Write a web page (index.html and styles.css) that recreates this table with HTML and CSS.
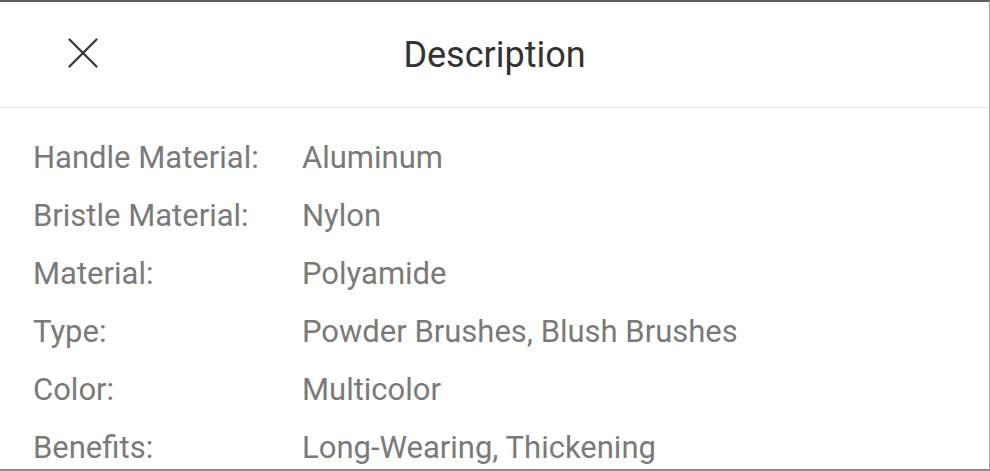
FILE: index.html
```html
<!DOCTYPE html>
<html>
<head>
<meta charset="utf-8">
<link rel="stylesheet" href="styles.css">
</head>
<body>
<div class="sheet">
  <header class="head">
    <button class="close" aria-label="Close">
      <svg width="30" height="30" viewBox="0 0 30 30"><path d="M1.5 1.5 L28.5 28.5 M28.5 1.5 L1.5 28.5" stroke="#333" stroke-width="2.2" stroke-linecap="round" fill="none"/></svg>
    </button>
    <h1 class="title">Description</h1>
    <span></span>
  </header>
  <div class="rows">
    <div class="row"><span class="label">Handle Material:</span><span class="value">Aluminum</span></div>
    <div class="row"><span class="label">Bristle Material:</span><span class="value">Nylon</span></div>
    <div class="row"><span class="label">Material:</span><span class="value">Polyamide</span></div>
    <div class="row"><span class="label">Type:</span><span class="value">Powder Brushes, Blush Brushes</span></div>
    <div class="row"><span class="label">Color:</span><span class="value">Multicolor</span></div>
    <div class="row"><span class="label">Benefits:</span><span class="value">Long-Wearing, Thickening</span></div>
  </div>
</div>
</body>
</html>
```
FILE: styles.css
```css
html, body { margin: 0; padding: 0; background: #fff; }
body { font-family: Roboto, "Noto Sans", Arial, sans-serif; }
.sheet {
  box-sizing: border-box;
  width: 990px;
  height: 471px;
  border-top: 2px solid #5f5f5f;
  border-right: 1px solid #a9a9a9;
  border-bottom: 2px solid #8c8c8c;
  overflow: hidden;
  background: #fff;
}
.head {
  height: 105px;
  border-bottom: 1px solid #e6e6e6;
  display: grid;
  grid-template-columns: 1fr auto 1fr;
  align-items: center;
}
.close {
  justify-self: start;
  margin-left: 68px;
  margin-top: -4px;
  padding: 0;
  border: 0;
  background: none;
  width: 30px;
  height: 30px;
  display: flex;
}
.title {
  margin: 0;
  margin-top: 0;
  font-weight: 400;
  font-size: 36px;
  color: #333;
}
.rows {
  padding: 20px 0 0 33px;
}
.row {
  display: grid;
  grid-template-columns: 269px 1fr;
  height: 58px;
  align-items: center;
  font-size: 31px;
  color: #7a7a7a;
}
```
